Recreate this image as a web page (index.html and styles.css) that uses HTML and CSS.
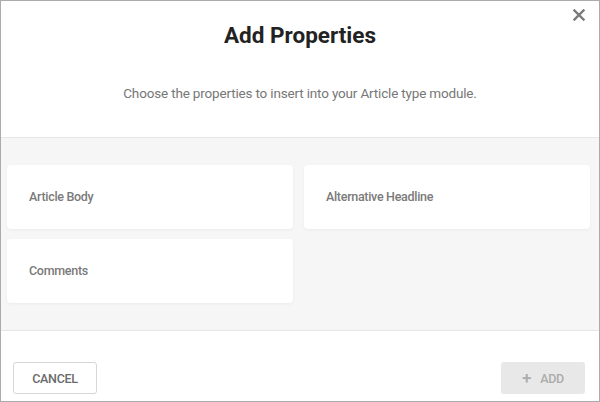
FILE: index.html
```html
<!DOCTYPE html>
<html>
<head>
<meta charset="utf-8">
<link rel="stylesheet" href="styles.css">
</head>
<body>
<div class="dialog">
  <header class="head">
    <button class="close" aria-label="Close">
      <svg width="12" height="12" viewBox="0 0 12 12"><path d="M1.5 1.5 L10.5 10.5 M10.5 1.5 L1.5 10.5" stroke="#7a7a7a" stroke-width="2.4" stroke-linecap="square"/></svg>
    </button>
    <h1 class="title">Add Properties</h1>
    <p class="subtitle">Choose the properties to insert into your Article type module.</p>
  </header>
  <main class="grid-area">
    <div class="grid">
      <div class="card">Article Body</div>
      <div class="card">Alternative Headline</div>
      <div class="card">Comments</div>
    </div>
  </main>
  <footer class="foot">
    <button class="btn btn-cancel">CANCEL</button>
    <button class="btn btn-add" disabled><span class="plus">+</span>ADD</button>
  </footer>
</div>
</body>
</html>
```
FILE: styles.css
```css
* { box-sizing: border-box; }
html, body { margin: 0; padding: 0; background: #fff; }
body { font-family: Roboto, "Liberation Sans", sans-serif; }
.dialog {
  width: 600px;
  height: 402px;
  border: 1px solid #ababab;
  display: flex;
  flex-direction: column;
  background: #fff;
}
.head {
  position: relative;
  height: 137px;
  border-bottom: 1px solid #e6e6e6;
  display: flex;
  flex-direction: column;
  align-items: center;
}
.close {
  position: absolute;
  top: 8px;
  right: 14px;
  border: 0;
  background: none;
  padding: 0;
  width: 12px;
  height: 12px;
  display: flex;
}
.title {
  margin: 20px 0 0;
  font-size: 22.5px;
  line-height: 28px;
  font-weight: 700;
  color: #222;
}
.subtitle {
  margin: 35px 0 0;
  font-size: 13.5px;
  line-height: 18px;
  letter-spacing: -0.17px;
  color: #777;
}
.grid-area {
  flex: 1;
  background: #f6f6f6;
  border-bottom: 1px solid #e6e6e6;
  padding: 27px 9px 0 6px;
}
.grid {
  display: grid;
  grid-template-columns: 1fr 1fr;
  column-gap: 11px;
  row-gap: 10px;
}
.card {
  background: #fff;
  height: 64px;
  border-radius: 4px;
  box-shadow: 0 1px 3px rgba(0,0,0,0.05);
  display: flex;
  align-items: center;
  padding-left: 22px;
  padding-bottom: 2px;
  font-size: 12.5px;
  letter-spacing: -0.3px;
  font-weight: 500;
  color: #7a7a7a;
}
.foot {
  height: 70px;
  display: flex;
  justify-content: space-between;
  align-items: flex-start;
  padding: 31px 14px 0 12px;
}
.btn {
  height: 32px;
  border-radius: 3px;
  font-family: Roboto, "Liberation Sans", sans-serif;
  font-size: 12.5px;
  letter-spacing: -0.3px;
  font-weight: 500;
  display: flex;
  align-items: center;
  justify-content: center;
}
.btn-cancel {
  width: 84px;
  background: #fff;
  border: 1px solid #d6d6d6;
  color: #6a6a6a;
}
.btn-add {
  width: 84px;
  background: #e8e8e8;
  border: 0;
  color: #ababab;
}
.plus {
  font-size: 17px;
  font-weight: 500;
  margin-right: 9px;
  line-height: 1;
}
```
